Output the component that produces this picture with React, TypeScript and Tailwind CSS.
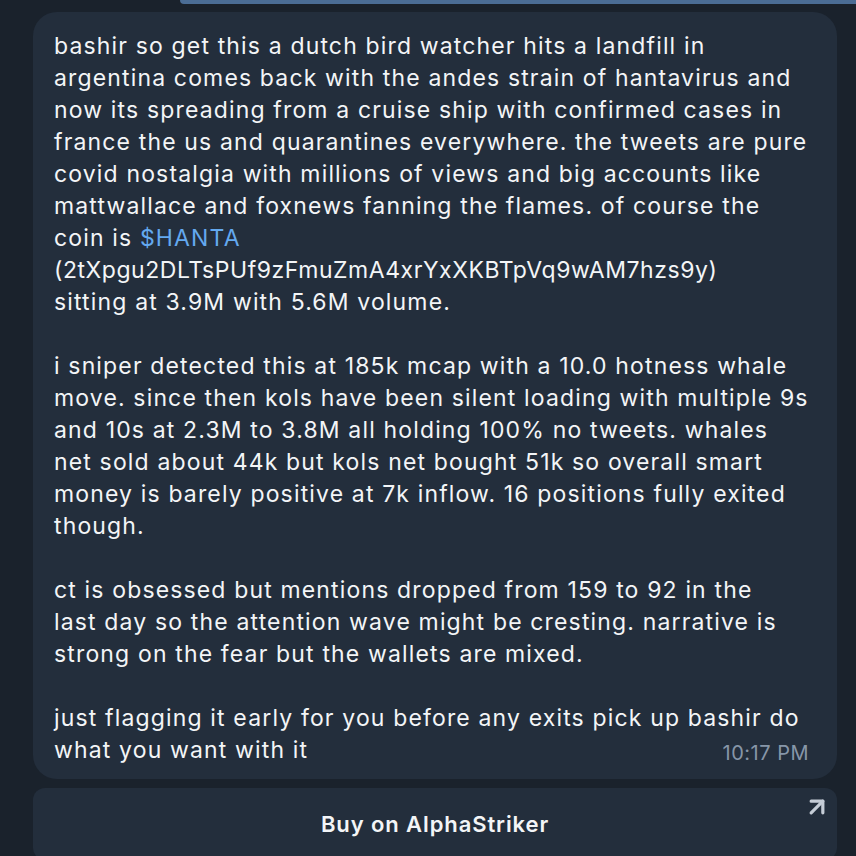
import { Fragment } from "react";
import { ArrowUpRight } from "lucide-react";

const font = { fontFamily: "Inter, 'Noto Sans', sans-serif" };

// lines broken the way the chat client wraps them
const paragraphs: React.ReactNode[][] = [
  [
    "bashir so get this a dutch bird watcher hits a landfill in",
    "argentina comes back with the andes strain of hantavirus and",
    "now its spreading from a cruise ship with confirmed cases in",
    "france the us and quarantines everywhere. the tweets are pure",
    "covid nostalgia with millions of views and big accounts like",
    "mattwallace and foxnews fanning the flames. of course the",
    <>coin is <span className="text-[#64a9ef]">$HANTA</span></>,
    <span className="tracking-[0.55px]">(2tXpgu2DLTsPUf9zFmuZmA4xrYxXKBTpVq9wAM7hzs9y)</span>,
    "sitting at 3.9M with 5.6M volume.",
  ],
  [
    "i sniper detected this at 185k mcap with a 10.0 hotness whale",
    "move. since then kols have been silent loading with multiple 9s",
    "and 10s at 2.3M to 3.8M all holding 100% no tweets. whales",
    "net sold about 44k but kols net bought 51k so overall smart",
    "money is barely positive at 7k inflow. 16 positions fully exited",
    "though.",
  ],
  [
    "ct is obsessed but mentions dropped from 159 to 92 in the",
    "last day so the attention wave might be cresting. narrative is",
    "strong on the fear but the wallets are mixed.",
  ],
  [
    "just flagging it early for you before any exits pick up bashir do",
    "what you want with it",
  ],
];

const Lines = ({ lines }: { lines: React.ReactNode[] }) => (
  <>
    {lines.map((line, i) => (
      <Fragment key={i}>
        {i > 0 && <br />}
        {line}
      </Fragment>
    ))}
  </>
);

export default function App() {
  return (
    <div className="w-[856px] h-[856px] overflow-hidden bg-[#1a222c] text-[#f3f5f7]" style={font}>
      {/* bottom edge of the previous outgoing message */}
      <div className="ml-[180px] h-[4px] bg-[#4b6d95] rounded-bl-[16px]" />

      <div className="mt-[8px] ml-[33px] mr-[19px] bg-[#232e3c] rounded-[24px] pt-[18px] pb-[13px] pl-[21px] pr-[10px] text-[23px] leading-[32px] tracking-[1.15px] whitespace-nowrap">
        {paragraphs.map((lines, i) => (
          <p key={i} className={i > 0 ? "mt-[32px]" : ""}>
            <Lines lines={lines} />
            {i === paragraphs.length - 1 && (
              <span className="float-right mt-[3px] mr-[18px] text-[20px] tracking-[0.5px] text-[#8796a8]">10:17 PM</span>
            )}
          </p>
        ))}
      </div>

      <div className="relative mt-[9px] ml-[33px] mr-[19px] h-[72px] rounded-[12px] bg-[#232e3c] flex items-center justify-center">
        <span className="text-[22px] font-semibold tracking-[0.9px] text-[#f3f5f7]">Buy on AlphaStriker</span>
        <ArrowUpRight className="absolute top-[5px] right-[6px] text-[#c5ccd6]" size={28} strokeWidth={2.75} />
      </div>
    </div>
  );
}
